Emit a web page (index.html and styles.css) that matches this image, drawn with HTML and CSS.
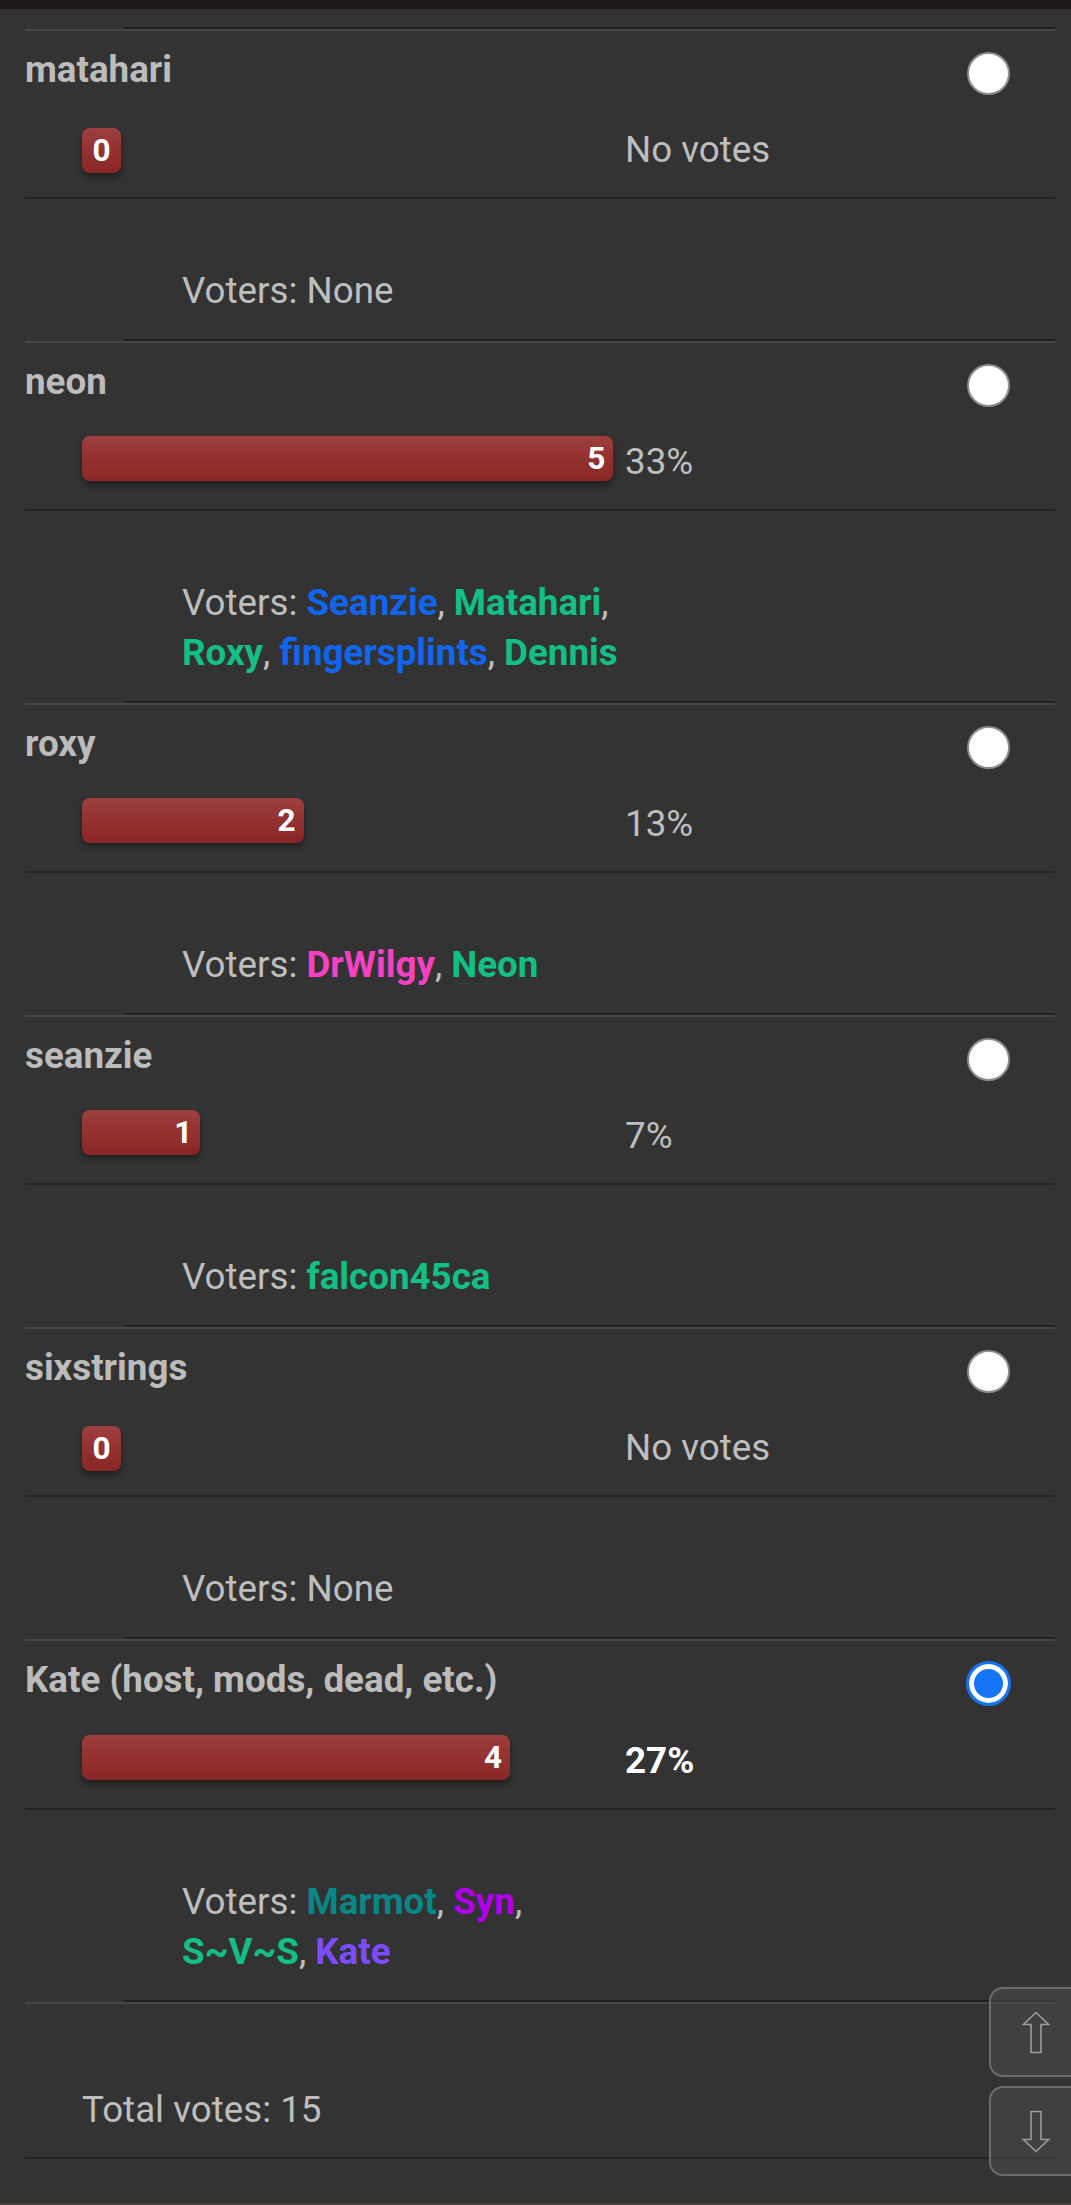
FILE: index.html
```html
<!DOCTYPE html>
<html lang="en">
<head>
<meta charset="utf-8">
<title>Poll results</title>
<link rel="stylesheet" href="styles.css">
</head>
<body>
<div class="topbar"></div>
<main class="poll">
  <section class="option">
    <div class="sep"></div>
    <div class="head"><span class="label">matahari</span><span class="radio"></span></div>
    <div class="result">
      <div class="barcell"><span class="bar zero">0</span></div>
      <span class="pct">No votes</span>
    </div>
    <div class="rule"></div>
    <p class="voters">Voters: None</p>
  </section>

  <section class="option">
    <div class="sep"></div>
    <div class="head"><span class="label">neon</span><span class="radio"></span></div>
    <div class="result">
      <div class="barcell"><span class="bar" style="--v:5">5</span></div>
      <span class="pct">33%</span>
    </div>
    <div class="rule"></div>
    <p class="voters">Voters: <b class="u-blue">Seanzie</b>, <b class="u-green">Matahari</b>, <b class="u-green">Roxy</b>, <b class="u-blue">fingersplints</b>, <b class="u-green">Dennis</b></p>
  </section>

  <section class="option">
    <div class="sep"></div>
    <div class="head"><span class="label">roxy</span><span class="radio"></span></div>
    <div class="result">
      <div class="barcell"><span class="bar" style="--v:2">2</span></div>
      <span class="pct">13%</span>
    </div>
    <div class="rule"></div>
    <p class="voters">Voters: <b class="u-pink">DrWilgy</b>, <b class="u-green">Neon</b></p>
  </section>

  <section class="option">
    <div class="sep"></div>
    <div class="head"><span class="label">seanzie</span><span class="radio"></span></div>
    <div class="result">
      <div class="barcell"><span class="bar" style="--v:1">1</span></div>
      <span class="pct">7%</span>
    </div>
    <div class="rule"></div>
    <p class="voters">Voters: <b class="u-green">falcon45ca</b></p>
  </section>

  <section class="option">
    <div class="sep"></div>
    <div class="head"><span class="label">sixstrings</span><span class="radio"></span></div>
    <div class="result">
      <div class="barcell"><span class="bar zero">0</span></div>
      <span class="pct">No votes</span>
    </div>
    <div class="rule"></div>
    <p class="voters">Voters: None</p>
  </section>

  <section class="option">
    <div class="sep"></div>
    <div class="head"><span class="label">Kate (host, mods, dead, etc.)</span><span class="radio on"></span></div>
    <div class="result">
      <div class="barcell"><span class="bar" style="--v:4">4</span></div>
      <span class="pct mine">27%</span>
    </div>
    <div class="rule"></div>
    <p class="voters">Voters: <b class="u-teal">Marmot</b>, <b class="u-purple">Syn</b>, <b class="u-green">S~V~S</b>, <b class="u-violet">Kate</b></p>
  </section>

  <section class="totals">
    <div class="sep"></div>
    <p class="total">Total votes: 15</p>
    <div class="rule flush"></div>
  </section>
</main>
<div class="bottombar"></div>

<nav class="scroller">
  <button class="scroll-btn" type="button" aria-label="Scroll up">
    <svg width="28" height="43" viewBox="0 0 28 43"><path d="M14 1.5 L26.5 13.5 L19 13.5 L19 41.5 L9 41.5 L9 13.5 L1.5 13.5 Z" fill="none" stroke="#9c9c9c" stroke-width="1.6" stroke-linejoin="miter"/></svg>
  </button>
  <button class="scroll-btn" type="button" aria-label="Scroll down">
    <svg width="28" height="43" viewBox="0 0 28 43"><path d="M14 41.5 L26.5 29.5 L19 29.5 L19 1.5 L9 1.5 L9 29.5 L1.5 29.5 Z" fill="none" stroke="#9c9c9c" stroke-width="1.6" stroke-linejoin="miter"/></svg>
  </button>
</nav>
</body>
</html>
```

FILE: styles.css
```css
html, body {
  margin: 0;
  padding: 0;
}

body {
  background: #333333;
  font-family: Roboto, "Liberation Sans", sans-serif;
  font-size: 36.75px;
  line-height: 50px;
  color: #bebebe;
  min-height: 2205px;
}

.topbar {
  height: 9px;
  background: #1e1a1a;
}

.poll {
  padding: 18px 16px 0 25px;
}

.sep {
  height: 2px;
  border-bottom: 2px solid #464646;
}

.sep::before {
  content: "";
  display: block;
  height: 2px;
  margin-left: 99px;
  background: #202020;
}

.head {
  display: flex;
  justify-content: space-between;
  align-items: flex-start;
  padding-top: 14px;
}

.label {
  font-weight: 700;
  color: #bcbcbc;
}

.radio {
  flex: none;
  box-sizing: border-box;
  width: 43px;
  height: 43px;
  margin: 7px 45px 0 0;
  border-radius: 50%;
  background: #ffffff;
  border: 2px solid #8c8c8c;
}

.radio.on {
  width: 45px;
  height: 45px;
  margin: 6px 44px 0 0;
  background: #1574f4;
  border: 3px solid #1574f4;
  box-shadow: inset 0 0 0 5px #ffffff;
}

.result {
  display: flex;
  align-items: flex-start;
  height: 45px;
  margin-top: 29px;
  padding-left: 57px;
}

.barcell {
  flex: 0 0 543px;
}

.bar {
  display: block;
  box-sizing: border-box;
  width: calc(var(--v) * 103.25px + 15px);
  height: 45px;
  padding-right: 8px;
  text-align: right;
  font-size: 31.5px;
  line-height: 45px;
  font-weight: 700;
  color: #ffffff;
  border-radius: 8px;
  background: linear-gradient(#9e3e3e, #892525);
  box-shadow: 0 4px 6px rgba(0, 0, 0, 0.4);
}

.bar.zero {
  display: inline-block;
  width: auto;
  padding: 0 10.5px;
}

.pct {
  line-height: 45px;
  padding-top: 3px;
}

.pct.mine {
  font-weight: 700;
  color: #ffffff;
}

.rule {
  height: 2px;
  margin-top: 28px;
  background: #232323;
}

.rule.flush {
  margin-top: 0;
}

.voters {
  width: 443px;
  margin: 66.5px 0 0 157px;
  padding-bottom: 23.5px;
}

.voters b {
  font-weight: 700;
}

.u-blue { color: #1066f0; }
.u-green { color: #12bf84; }
.u-pink { color: #f541c2; }
.u-teal { color: #078787; }
.u-purple { color: #b200ef; }
.u-violet { color: #7c4dff; }

.total {
  margin: 0;
  padding: 80.5px 0 22.5px 57px;
}

.bottombar {
  height: 3px;
  margin-top: 44px;
  background: #4a3d3d;
}

.scroller {
  position: fixed;
  right: -22px;
  bottom: 29px;
  display: flex;
  flex-direction: column;
  gap: 9px;
}

.scroll-btn {
  box-sizing: border-box;
  width: 104px;
  height: 90px;
  display: flex;
  align-items: center;
  padding: 0 0 0 31px;
  margin: 0;
  border: 2px solid #6c6c6c;
  border-radius: 14px;
  background: rgba(74, 74, 74, 0.55);
}

.scroll-btn svg {
  display: block;
}
```
